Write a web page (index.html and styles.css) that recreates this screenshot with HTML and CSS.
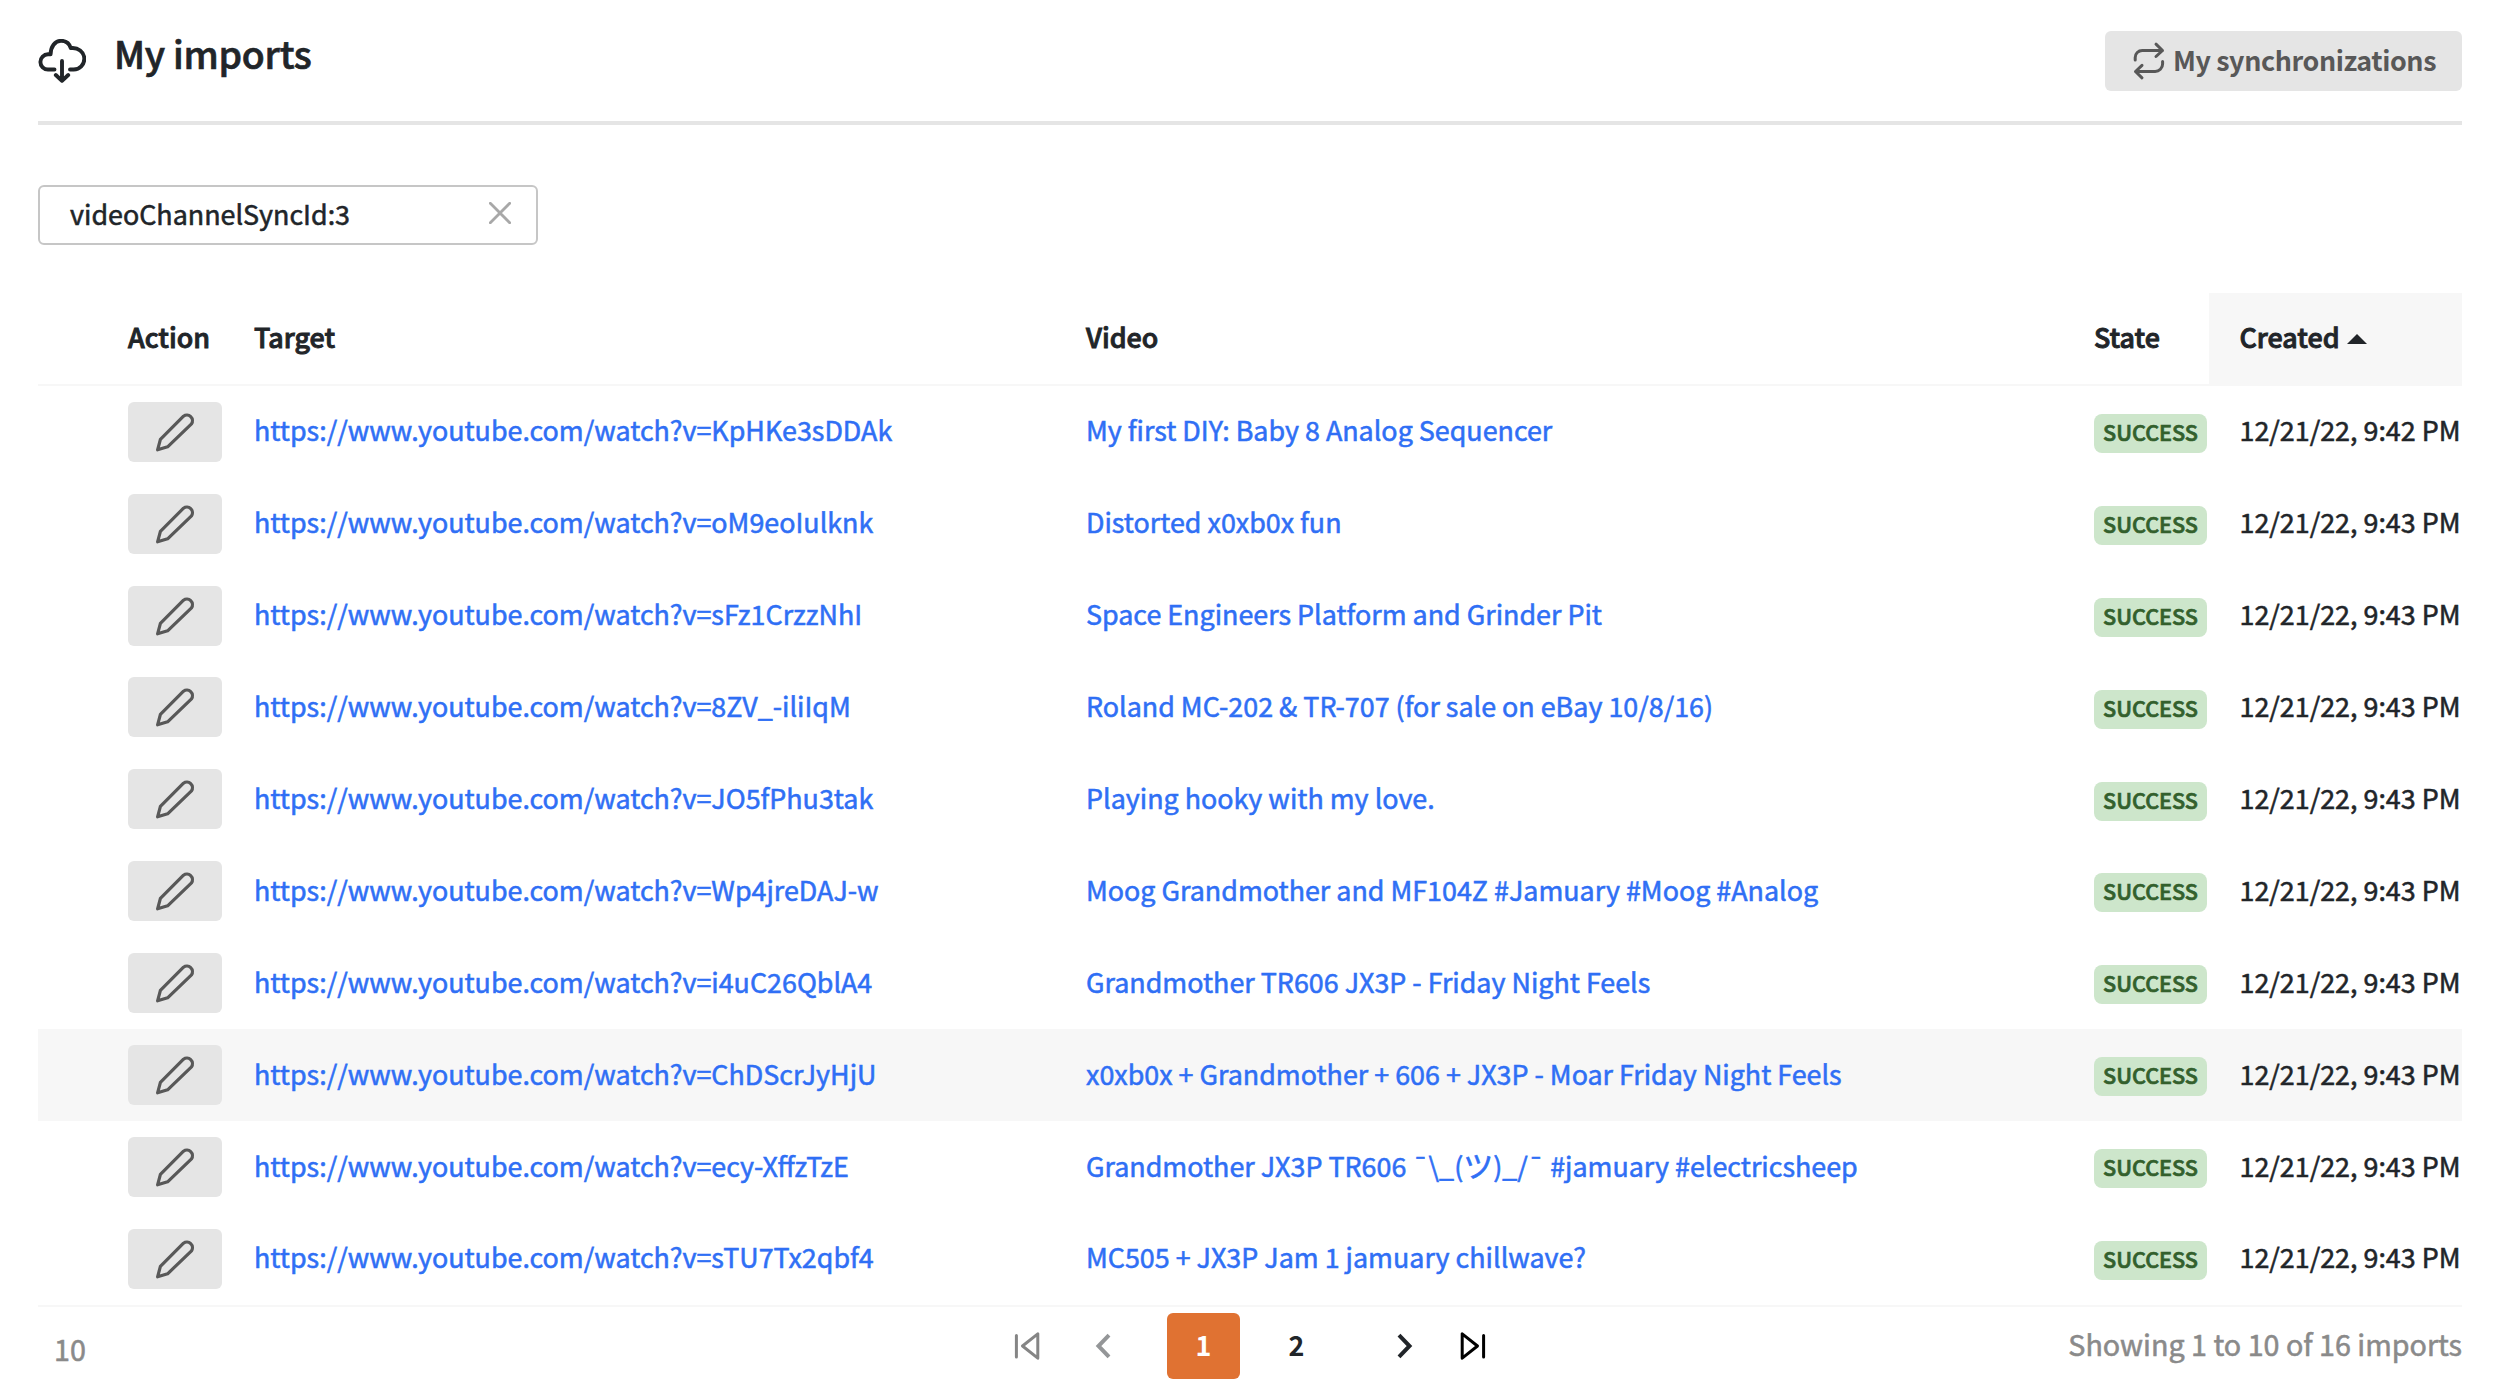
FILE: index.html
```
<!DOCTYPE html>
<html lang="en">
<head>
<meta charset="utf-8">
<title>My imports</title>
<link rel="stylesheet" href="styles.css">
</head>
<body>
<svg class="defs" aria-hidden="true">
  <symbol id="pencil" viewBox="3 0 44 50"><path d="M7.6 42.8 10.4 32.4 33.5 9.2a5.6 5.6 0 0 1 8 7.6L17.6 39.8z"/></symbol>
</svg>
<header class="page-header">
  <svg class="icon cloud" viewBox="0 0 48 46"><path d="M16.5 30.5H10A7.6 7.6 0 0 1 10 15.3h2.6C12.6 7.8 17 1.8 23 1.8c4.6 0 8.3 2.6 9.8 7.3 7-1 13.5 3.8 13.5 10.7 0 6-4.6 10.7-10.6 10.7H32M24 22v19.500M17.800 36 24 41.800 30.200 36"/></svg>
  <h1>My imports</h1>
  <a class="button sync">
    <svg class="icon" viewBox="12 12 34 38"><path d="M15.200 30v-2.500a7 7 0 0 1 7-7H42.500M36 14.200l6.500 6.300L36 26.500M42.600 31.500v2.500a7.500 7.500 0 0 1-7.500 7.500H15.500M22 35.300 15.500 41.500 22 47.800"/></svg>
    <span>My synchronizations</span>
  </a>
</header>
<main>
  <div class="search"><span>videoChannelSyncId:3</span><svg class="icon" viewBox="0 0 22 22"><path d="M1.300 1.300 20.700 20.700M20.700 1.300 1.300 20.700"/></svg></div>
  <section class="table">
    <div class="row head"><span></span><span>Action</span><span>Target</span><span>Video</span><span>State</span><span class="created">Created<i class="caret"></i></span></div>
    <div class="row"><span></span><a class="button edit"><svg class="icon"><use href="#pencil"/></svg></a><a class="link">https://www.youtube.com/watch?v=KpHKe3sDDAk</a><a class="link">My first DIY: Baby 8 Analog Sequencer</a><span class="badge">SUCCESS</span><span class="date">12/21/22, 9:42 PM</span></div>
    <div class="row"><span></span><a class="button edit"><svg class="icon"><use href="#pencil"/></svg></a><a class="link">https://www.youtube.com/watch?v=oM9eoIulknk</a><a class="link">Distorted x0xb0x fun</a><span class="badge">SUCCESS</span><span class="date">12/21/22, 9:43 PM</span></div>
    <div class="row"><span></span><a class="button edit"><svg class="icon"><use href="#pencil"/></svg></a><a class="link">https://www.youtube.com/watch?v=sFz1CrzzNhI</a><a class="link">Space Engineers Platform and Grinder Pit</a><span class="badge">SUCCESS</span><span class="date">12/21/22, 9:43 PM</span></div>
    <div class="row"><span></span><a class="button edit"><svg class="icon"><use href="#pencil"/></svg></a><a class="link">https://www.youtube.com/watch?v=8ZV_-iliIqM</a><a class="link">Roland MC-202 &amp; TR-707 (for sale on eBay 10/8/16)</a><span class="badge">SUCCESS</span><span class="date">12/21/22, 9:43 PM</span></div>
    <div class="row"><span></span><a class="button edit"><svg class="icon"><use href="#pencil"/></svg></a><a class="link">https://www.youtube.com/watch?v=JO5fPhu3tak</a><a class="link">Playing hooky with my love.</a><span class="badge">SUCCESS</span><span class="date">12/21/22, 9:43 PM</span></div>
    <div class="row"><span></span><a class="button edit"><svg class="icon"><use href="#pencil"/></svg></a><a class="link">https://www.youtube.com/watch?v=Wp4jreDAJ-w</a><a class="link">Moog Grandmother and MF104Z #Jamuary #Moog #Analog</a><span class="badge">SUCCESS</span><span class="date">12/21/22, 9:43 PM</span></div>
    <div class="row"><span></span><a class="button edit"><svg class="icon"><use href="#pencil"/></svg></a><a class="link">https://www.youtube.com/watch?v=i4uC26QblA4</a><a class="link">Grandmother TR606 JX3P - Friday Night Feels</a><span class="badge">SUCCESS</span><span class="date">12/21/22, 9:43 PM</span></div>
    <div class="row hovered"><span></span><a class="button edit"><svg class="icon"><use href="#pencil"/></svg></a><a class="link">https://www.youtube.com/watch?v=ChDScrJyHjU</a><a class="link">x0xb0x + Grandmother + 606 + JX3P - Moar Friday Night Feels</a><span class="badge">SUCCESS</span><span class="date">12/21/22, 9:43 PM</span></div>
    <div class="row"><span></span><a class="button edit"><svg class="icon"><use href="#pencil"/></svg></a><a class="link">https://www.youtube.com/watch?v=ecy-XffzTzE</a><a class="link">Grandmother JX3P TR606 ¯\_(<span class="kana">ツ</span>)_/¯ #jamuary #electricsheep</a><span class="badge">SUCCESS</span><span class="date">12/21/22, 9:43 PM</span></div>
    <div class="row"><span></span><a class="button edit"><svg class="icon"><use href="#pencil"/></svg></a><a class="link">https://www.youtube.com/watch?v=sTU7Tx2qbf4</a><a class="link">MC505 + JX3P Jam 1 jamuary chillwave?</a><span class="badge">SUCCESS</span><span class="date">12/21/22, 9:43 PM</span></div>
  </section>
  <footer class="pager">
    <span class="per-page">10</span>
    <nav class="pages">
      <svg class="icon first" viewBox="0 0 28 30"><path d="M3.400 4.500v21.500M24.800 2.800v24.400L9.500 15z"/></svg>
      <svg class="icon prev" viewBox="0 0 20 30"><path d="M16 4.200 5.500 15 16 25.800"/></svg>
      <a class="page current">1</a>
      <a class="page">2</a>
      <svg class="icon next" viewBox="0 0 20 30"><path d="M4 4.200 14.500 15 4 25.800"/></svg>
      <svg class="icon last" viewBox="0 0 28 30"><path d="M24.600 4.500v21.500M3.200 2.800v24.400L18.500 15z"/></svg>
    </nav>
    <span class="summary">Showing 1 to 10 of 16 imports</span>
  </footer>
</main>
</body>
</html>
```
FILE: styles.css
```
* { box-sizing: border-box; }
body {
  margin: 0;
  padding: 0 54px 0 38px;
  height: 1388px;
  overflow: hidden;
  background: #fff;
  color: #212529;
  font: 400 26.87px/40px "Noto Sans CJK JP", "Noto Sans", sans-serif;
  white-space: nowrap;
  -webkit-text-stroke: 0.55px;
}
.defs { display: block; width: 0; height: 0; }
.icon {
  display: block;
  flex: none;
  fill: none;
  stroke: currentColor;
  stroke-linecap: round;
  stroke-linejoin: round;
}
.button {
  display: flex;
  align-items: center;
  height: 60px;
  border-radius: 6px;
  background: #e5e5e5;
  color: #585858;
}

.page-header {
  display: flex;
  align-items: center;
  height: 125px;
  border-bottom: 4px solid #e5e5e5;
}
.cloud { width: 48px; height: 46px; stroke-width: 3.9; margin: 3px 28px 0 0; }
h1 {
  margin: 0;
  padding-bottom: 15px;
  font-size: 37.4px;
  font-weight: 500;
  letter-spacing: -0.25px;
  line-height: 54px;
  -webkit-text-stroke: 0.7px;
}
.sync {
  width: 357px;
  margin-left: auto;
  padding-left: 27px;
  gap: 7px;
  font-weight: 700;
  letter-spacing: -0.4px;
  -webkit-text-stroke: 0;
}
.sync span { padding-bottom: 2px; }
.sync .icon { width: 34px; height: 38px; stroke-width: 3; }

.search {
  display: flex;
  align-items: center;
  justify-content: space-between;
  width: 500px;
  height: 60px;
  margin: 60px 0 48px;
  padding: 0 25px 0 30px;
  border: 2px solid #c6c6c6;
  border-radius: 6px;
}
.search span { padding-bottom: 2px; }
.search .icon { width: 22px; height: 22px; margin-top: -4px; stroke-width: 2.8; color: #a8a8a8; }

.row {
  display: grid;
  grid-template-columns: 90px 126px 832px 1008px 115px 253px;
  align-items: center;
  height: 91.9px;
}
.row.head {
  height: 93px;
  border-bottom: 2px solid #f7f7f7;
  font-weight: 500;
  -webkit-text-stroke: 0.9px;
}
.head > span { padding-bottom: 4px; }
.head .created {
  display: flex;
  align-items: center;
  align-self: stretch;
  padding-left: 30.5px;
  background: #f7f7f7;
}
.caret {
  margin: 5px 0 0 7px;
  border: 10px solid transparent;
  border-top: 0;
  border-bottom-color: #212529;
}
.hovered { background: #f7f7f7; }
.edit { width: 94px; justify-content: center; margin-top: -0.4px; }
.edit .icon { width: 44px; height: 50px; stroke-width: 3.2; }
.link { color: #2f6ff5; padding-bottom: 3px; }
.kana { font-size: 30px; line-height: 0; }
.date { padding: 0 0 3px 30.5px; }
.badge {
  width: 113px;
  height: 39px;
  margin-top: 3px;
  border-radius: 8px;
  background: #cde6cb;
  color: #33602d;
  font-size: 21.6px;
  font-weight: 500;
  line-height: 36px;
  text-align: center;
  -webkit-text-stroke: 0.7px;
}

.pager {
  display: grid;
  grid-template-columns: 1fr auto 1fr;
  align-items: center;
  height: 80px;
  border-top: 2px solid #f7f7f7;
  color: #8a8a8a;
  font-size: 28.7px;
}
.per-page { padding: 7px 0 0 16px; }
.summary { text-align: right; padding-bottom: 3px; }
.pages { display: flex; align-items: center; height: 78px; }
.first, .last { width: 28px; height: 30px; stroke-width: 3; }
.prev, .next { width: 20px; height: 30px; stroke-width: 4; stroke-linecap: butt; stroke-linejoin: miter; }
.first { color: #858585; }
.prev { margin: 0 54px 0 52px; color: #949698; }
.next { margin: 0 44px 0 62px; color: #212529; }
.last { color: #000; }
.page {
  width: 73px;
  height: 66px;
  border-radius: 6px;
  color: #212529;
  font-size: 26.9px;
  font-weight: 700;
  line-height: 63px;
  text-align: center;
  -webkit-text-stroke: 0;
}
.page.current { margin-right: 20px; background: #e07232; color: #fff; }
```
